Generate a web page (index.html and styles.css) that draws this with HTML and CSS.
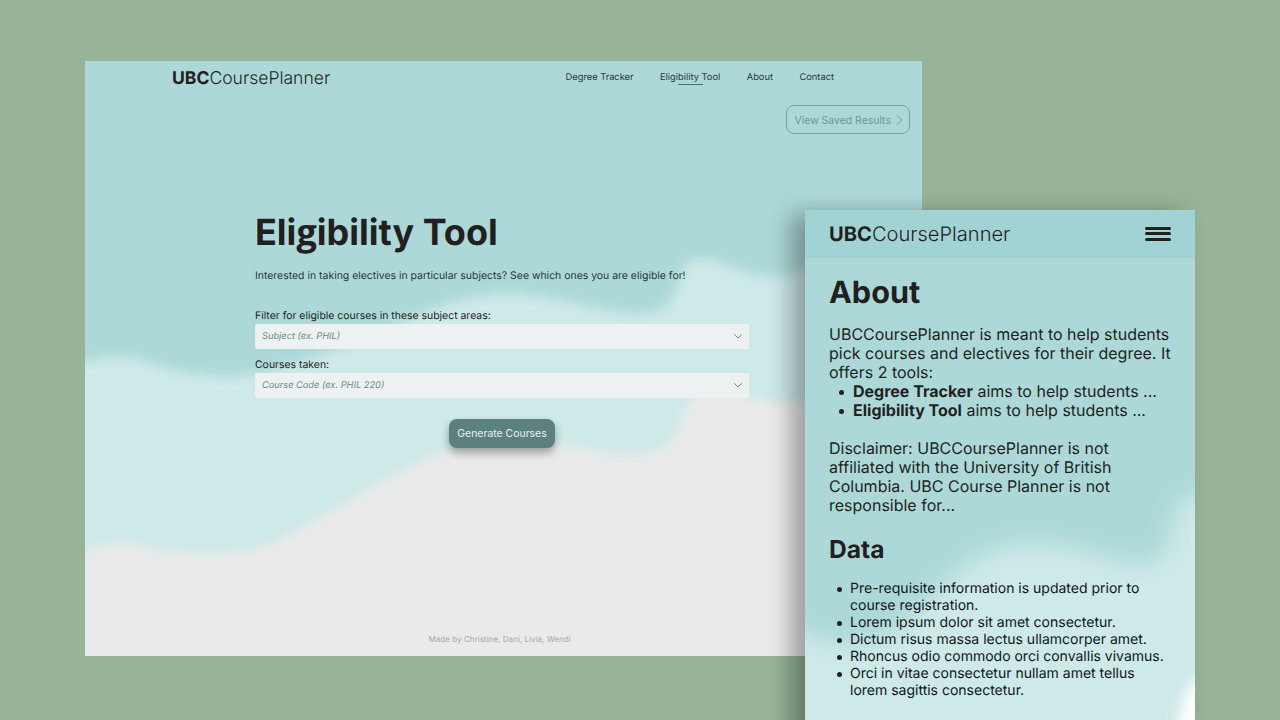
FILE: index.html
```html
<!DOCTYPE html>
<html lang="en">
<head>
<meta charset="utf-8">
<title>UBCCoursePlanner</title>
<link rel="stylesheet" href="styles.css">
</head>
<body>
<main class="desktop">
  <section class="window tool-page">
    <svg class="waves" viewBox="85 61 837 595" preserveAspectRatio="none" aria-hidden="true">
      <defs><filter id="soft" x="-10%" y="-10%" width="120%" height="120%"><feGaussianBlur stdDeviation="5.5"/></filter></defs>
      <g filter="url(#soft)">
        <path fill="#cde9e8" d="M50 20H980V340C910 365 842 400 790 403C750 406 718 377 697 394C677 407 689 430 661 449C624 463 579 446 541 439C482 431 444 449 400 472C347 499 289 542 246 551C202 558 160 550 137 545C112 538 102 551 50 553Z"/>
        <path fill="#acd9d8" d="M50 20H980V240C890 244 823 264 785 276C744 282 718 252 692 260C675 269 684 292 663 309C631 322 583 303 545 298C490 286 443 303 398 324C350 346 292 368 247 375C207 380 158 368 137 358C111 354 99 360 50 366Z"/>
      </g>
    </svg>
    <header class="topbar">
      <div class="logo"><b>UBC</b>CoursePlanner</div>
      <nav class="nav"><a>Degree Tracker</a><a class="current">Eligibility Tool</a><a>About</a><a>Contact</a></nav>
    </header>
    <div class="saved-row"><button class="saved"><span>View Saved Results</span><svg width="7" height="10" viewBox="0 0 7 10"><path d="M1 .5 6 5 1 9.500"/></svg></button></div>
    <form class="planner">
      <h1>Eli<span class="g">g</span>ibility Tool</h1>
      <p class="intro">Interested in taking electives in particular subjects? See which ones you are eligible for!</p>
      <label>Filter for eligible courses in these subject areas:</label>
      <div class="select"><span>Subject (ex. PHIL)</span><svg width="8" height="5" viewBox="0 0 8 5"><path d="M.5.5 4 4 7.500.5"/></svg></div>
      <label>Courses taken:</label>
      <div class="select"><span>Course Code (ex. PHIL 220)</span><svg width="8" height="5" viewBox="0 0 8 5"><path d="M.5.5 4 4 7.500.5"/></svg></div>
      <button class="generate" type="button"><span>Generate Courses</span></button>
    </form>
    <footer>Made by Christine, Dani, Livia, Wendi</footer>
  </section>

  <section class="window about-page">
    <div class="screen">
      <svg class="waves" viewBox="805 210 390 510" preserveAspectRatio="none" aria-hidden="true">
        <defs><filter id="softer" x="-20%" y="-20%" width="140%" height="140%"><feGaussianBlur stdDeviation="11"/></filter><filter id="glow" x="-40%" y="-40%" width="180%" height="180%"><feGaussianBlur stdDeviation="7"/></filter></defs>
        <g filter="url(#softer)">
          <path fill="#cde9e8" d="M760 630C800 618 823 650 860 644C918 635 937 571 992 551C1037 532 1086 552 1130 563C1188 572 1158 504 1194 494L1240 490V770H760Z"/>
        </g>
        <path filter="url(#glow)" fill="#fff" d="M1174 770C1176 724 1182 688 1198 678L1250 672V770Z"/>
      </svg>
      <header class="mobile-bar">
        <div class="logo"><b>UBC</b>CoursePlanner</div>
        <div class="menu"><i></i><i></i><i></i></div>
      </header>
      <article>
        <h2>About</h2>
        <p>UBCCoursePlanner is meant to help students<br>pick courses and electives for their degree. It<br>offers 2 tools:</p>
        <ul class="tools"><li><b>Degree Tracker</b> aims to help students ...</li><li><b>Eligibility Tool</b> aims to help students ...</li></ul>
        <p>Disclaimer: UBCCoursePlanner is not<br>affiliated with the University of British<br>Columbia. UBC Course Planner is not<br>responsible for...</p>
        <h3>Data</h3>
        <ul class="data"><li>Pre-requisite information is updated prior to<br>course registration.</li><li>Lorem ipsum dolor sit amet consectetur.</li><li>Dictum risus massa lectus ullamcorper amet.</li><li>Rhoncus odio commodo orci convallis vivamus.</li><li>Orci in vitae consectetur nullam amet tellus<br>lorem sagittis consectetur.</li></ul>
      </article>
    </div>
  </section>
</main>
</body>
</html>
```
FILE: styles.css
```css
* { box-sizing: border-box; }
body { margin: 0; font-family: Inter, "Liberation Sans", sans-serif; color: #231f20; text-rendering: geometricPrecision; }
h1, h2, h3, p, ul { margin: 0; padding: 0; }
button { font: inherit; border: 0; background: none; padding: 0; }
svg path { stroke-linecap: round; }
.desktop { position: relative; width: 1280px; height: 720px; overflow: hidden; background: #97b498; }
.window { position: absolute; }
.waves { position: absolute; inset: 0; width: 100%; height: 100%; z-index: -1; }

.tool-page { left: 85px; top: 61px; width: 837px; height: 595px; overflow: hidden; background: #eaeaea; z-index: 0; display: flex; flex-direction: column; }
.topbar { display: flex; align-items: center; justify-content: space-between; height: 33px; padding: 1px 88px 0 87px; }
.topbar .logo { font-size: 17.550px; font-weight: 300; }
.logo b { font-weight: 700; }
.nav { display: flex; gap: 26.500px; font-size: 9.300px; line-height: 12px; color: #26383b; }
.nav .current { position: relative; }
.nav .current::after { content: ""; position: absolute; left: 18px; width: 25px; bottom: -1px; height: 1px; background: #4b7173; }
.saved-row { display: flex; justify-content: flex-end; padding: 11px 12px 0 0; }
.saved { display: flex; align-items: center; justify-content: space-between; width: 124px; height: 29px; padding: 1px 6px 0 7.500px; border: 1px solid #79a2a1; border-radius: 8px; font-size: 10.450px; color: #6d9794; }
.saved path { fill: none; stroke: #6d9794; stroke-width: .8; }
.planner { display: flex; flex-direction: column; width: 494px; margin: 76px 0 0 170px; }
h1 { height: 44px; font-size: 36px; line-height: 44px; font-weight: 700; white-space: nowrap; }
h1 .g { font-family: "Open Sans", sans-serif; }
.intro { margin: 15px 0 27px; font-size: 10.450px; line-height: 13px; white-space: nowrap; color: #26383b; }
.planner label { font-size: 10.450px; line-height: 13px; margin-bottom: 1.700px; }
.select { display: flex; align-items: center; justify-content: space-between; height: 25px; margin-bottom: 9.800px; padding: 0 7px; border-radius: 2px; background: #edf1f2; font-size: 9.250px; font-style: italic; color: #6d8b88; }
.select path { fill: none; stroke: #657c7c; stroke-width: .9; }
.generate { align-self: center; width: 106px; height: 29px; margin-top: 11px; padding-top: 1px; border-radius: 8px; background: #5b807e; color: #e4f1f0; font-size: 10.450px; box-shadow: 0 5px 9px rgba(0, 0, 0, .32); }
footer { margin-top: auto; padding: 0 0 12px 343.500px; font-size: 8.100px; line-height: 10px; color: #a3abab; }

.about-page { left: 805px; top: 210px; width: 390px; height: 550px; box-shadow: -14px 4px 22px rgba(0, 0, 0, .32); }
.screen { position: relative; z-index: 0; height: 510px; overflow: hidden; background: #acd9d8; }
.mobile-bar { display: flex; align-items: center; justify-content: space-between; height: 48px; padding: 0 24px; background: #a1d3d4; }
.mobile-bar .logo { font-size: 20.100px; font-weight: 300; }
.menu { display: flex; flex-direction: column; gap: 2.500px; width: 26px; margin-top: -1px; }
.menu i { height: 3px; border-radius: 2px; background: #231f20; }
article { padding: 17px 0 0 24px; font-size: 16px; line-height: 19px; font-weight: 400; white-space: nowrap; }
h2 { height: 36px; margin-bottom: 14px; font-size: 30.600px; line-height: 36px; font-weight: 700; }
ul { list-style: none; }
li { position: relative; }
li::before { content: ""; position: absolute; left: -14.500px; top: 8px; width: 5px; height: 5px; border-radius: 50%; background: #231f20; }
.tools { padding-left: 24px; margin-bottom: 19px; }
.tools b { font-weight: 700; }
h3 { margin: 19px 0 16px; font-size: 24.600px; line-height: 30px; font-weight: 700; }
.data { padding-left: 21px; font-size: 14px; line-height: 17px; font-weight: 400; color: #0e1718; }
.data li::before { left: -13px; top: 7px; }
```
